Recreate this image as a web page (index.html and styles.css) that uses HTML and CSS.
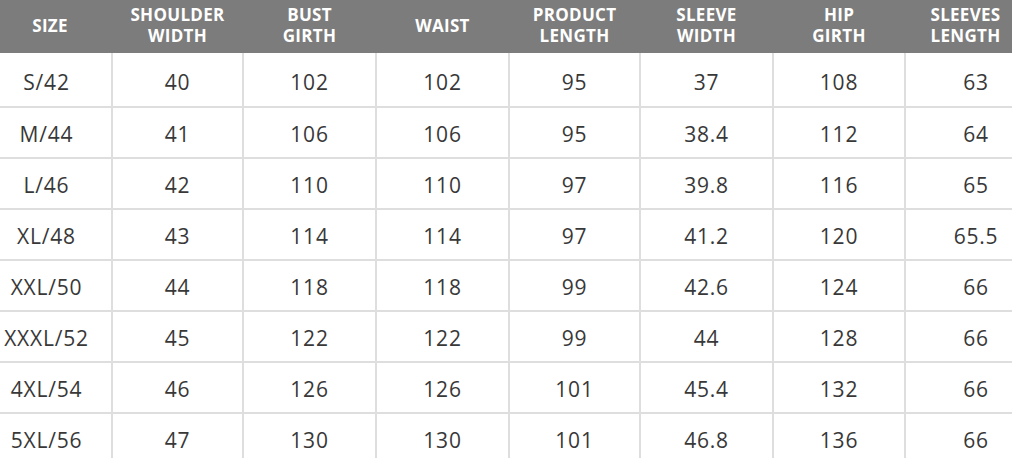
FILE: index.html
```html
<!DOCTYPE html>
<html>
<head>
<meta charset="utf-8">
<link rel="stylesheet" href="styles.css">
</head>
<body>
<table class="size-table">
  <colgroup>
    <col class="c1"><col class="c2"><col class="c3"><col class="c4"><col class="c5"><col class="c6"><col class="c7"><col class="c8">
  </colgroup>
  <thead>
    <tr>
      <th class="first">SIZE</th>
      <th>SHOULDER<br>WIDTH</th>
      <th>BUST<br>GIRTH</th>
      <th>WAIST</th>
      <th>PRODUCT<br>LENGTH</th>
      <th>SLEEVE<br>WIDTH</th>
      <th>HIP<br>GIRTH</th>
      <th class="last">SLEEVES<br>LENGTH</th>
    </tr>
  </thead>
  <tbody>
    <tr class="r1"><td class="first">S/42</td><td>40</td><td>102</td><td>102</td><td>95</td><td>37</td><td>108</td><td class="last">63</td></tr>
    <tr><td class="first">M/44</td><td>41</td><td>106</td><td>106</td><td>95</td><td>38.4</td><td>112</td><td class="last">64</td></tr>
    <tr><td class="first">L/46</td><td>42</td><td>110</td><td>110</td><td>97</td><td>39.8</td><td>116</td><td class="last">65</td></tr>
    <tr><td class="first">XL/48</td><td>43</td><td>114</td><td>114</td><td>97</td><td>41.2</td><td>120</td><td class="last">65.5</td></tr>
    <tr><td class="first">XXL/50</td><td>44</td><td>118</td><td>118</td><td>99</td><td>42.6</td><td>124</td><td class="last">66</td></tr>
    <tr><td class="first">XXXL/52</td><td>45</td><td>122</td><td>122</td><td>99</td><td>44</td><td>128</td><td class="last">66</td></tr>
    <tr><td class="first">4XL/54</td><td>46</td><td>126</td><td>126</td><td>101</td><td>45.4</td><td>132</td><td class="last">66</td></tr>
    <tr><td class="first">5XL/56</td><td>47</td><td>130</td><td>130</td><td>101</td><td>46.8</td><td>136</td><td class="last">66</td></tr>
  </tbody>
</table>
</body>
</html>
```
FILE: styles.css
```css
html, body {
  margin: 0;
  padding: 0;
  background: #ffffff;
}
body {
  width: 1012px;
  height: 458px;
  overflow: hidden;
  font-family: "Open Sans", "DejaVu Sans", sans-serif;
}
.size-table {
  border-collapse: collapse;
  table-layout: fixed;
  width: 1012px;
}
.c1 { width: 112px; }
.c2 { width: 131px; }
.c3 { width: 133px; }
.c4 { width: 133px; }
.c5 { width: 131px; }
.c6 { width: 133px; }
.c7 { width: 132px; }
.c8 { width: 107px; }

.size-table th {
  background: #7c7c7c;
  color: #ffffff;
  font-weight: 700;
  font-size: 17px;
  line-height: 21px;
  letter-spacing: 0.3px;
  height: 53px;
  padding: 0 0 3px 0;
  text-align: center;
  vertical-align: middle;
  box-sizing: border-box;
}
.size-table th.first { padding-right: 12px; }
.size-table th.last { padding-left: 14px; }

.size-table td {
  color: #383838;
  font-size: 21px;
  letter-spacing: 0.8px;
  height: 47px;
  padding: 2px 0 0 0;
  text-align: center;
  vertical-align: middle;
  border-left: 2px solid #dedede;
  border-bottom: 2px solid #dedede;
}
.size-table tr.r1 td { height: 49px; padding-top: 4px; }
.size-table td.first {
  border-left: none;
  padding-right: 18px;
}
.size-table td.last {
  padding-left: 34px;
}
```
